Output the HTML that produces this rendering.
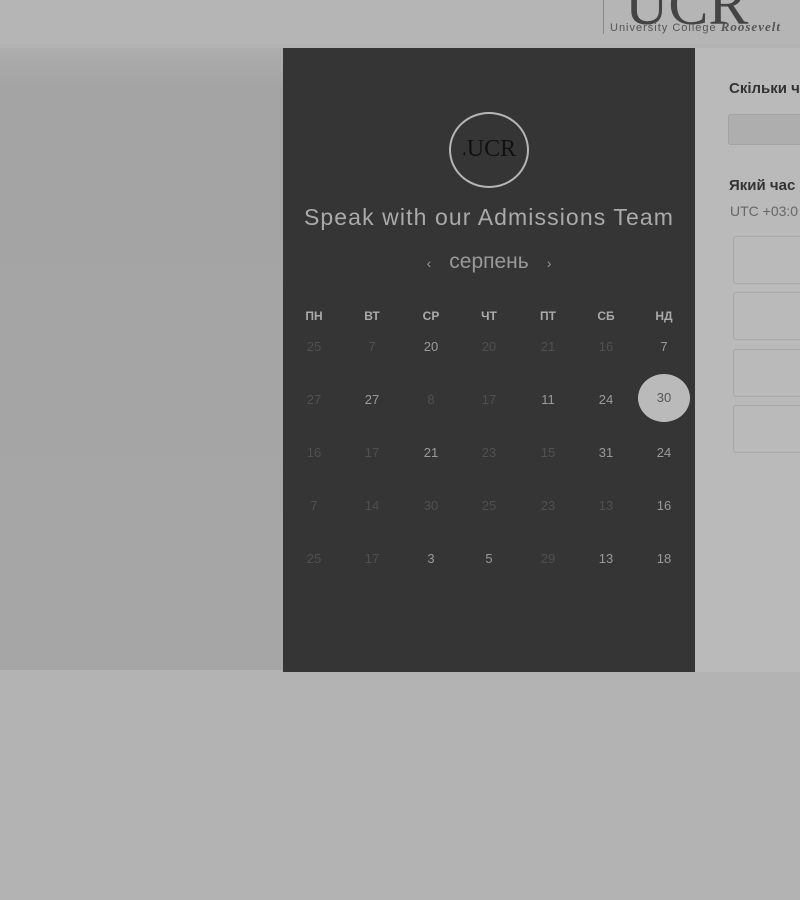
<!DOCTYPE html>
<html><head><meta charset="utf-8"><style>
*{margin:0;padding:0;box-sizing:border-box}
body{width:800px;height:900px;background:#b3b3b3;position:relative;overflow:hidden;font-family:"Liberation Sans",sans-serif}
.hdr{position:absolute;left:0;top:0;width:800px;height:44px;background:#b5b5b5}
.left{position:absolute;left:0;top:48px;width:283px;height:622px;background:linear-gradient(#adadad,#a4a4a4 40px,#a6a6a6)}
.dark{position:absolute;left:283px;top:48px;width:412px;height:624px;background:#353535}
.right{position:absolute;left:695px;top:48px;width:105px;height:624px;background:#bababa}
.logo{position:absolute;left:166px;top:64px;width:80px;height:76px;border:2px solid #b5b5b5;border-radius:50%;color:#111;font-family:"Liberation Serif",serif;font-size:24px;text-align:center;line-height:70px}
.title{position:absolute;left:0;width:412px;top:156px;text-align:center;color:#aaa;font-size:23px;letter-spacing:1.1px}
.month{position:absolute;left:0;width:412px;top:202px;text-align:center;color:#999;font-size:21px}
.d{position:absolute;width:50px;margin-left:-25px;text-align:center;font-size:13px;color:#505050}
.h{color:#aaa;font-weight:bold;font-size:12px}
.l{color:#9a9a9a}
.sel{position:absolute;width:52px;height:48px;border-radius:50%;background:#bababa;color:#555;text-align:center;line-height:48px;font-size:13px}
</style></head><body>
<div class="hdr"></div>
<div style="position:absolute;left:603px;top:0;width:200px;height:34px;border-left:1px solid #888"></div>
<div style="position:absolute;left:610px;top:19px;font-size:11px;color:#555;letter-spacing:1px;white-space:nowrap">University College <i style="font-family:'Liberation Serif',serif;font-weight:bold;font-size:13px">Roosevelt</i></div>
<div style="position:absolute;left:625px;top:-30px;font-family:'Liberation Serif',serif;font-size:60px;color:#444">UCR</div>
<div class="left"></div>
<div class="dark">
<div class="logo"><span style="font-size:8px">◖</span>UCR</div>
<div class="title">Speak with our Admissions Team</div>
<div class="month"><span style="font-size:14px;margin-right:18px">‹</span>серпень<span style="font-size:14px;margin-left:18px">›</span></div>
</div>
<div class="right">
<div style="position:absolute;left:34px;top:32px;font-weight:bold;font-size:15px;color:#333;white-space:nowrap">Скільки ч</div>
<div style="position:absolute;left:33px;top:66px;width:80px;height:31px;background:#aeaeae;border:1px solid #a3a3a3;border-radius:3px"></div>
<div style="position:absolute;left:34px;top:129px;font-weight:bold;font-size:15px;color:#333;white-space:nowrap">Який час</div>
<div style="position:absolute;left:35px;top:155px;font-size:14px;color:#666;white-space:nowrap">UTC +03:0</div>
<div style="position:absolute;left:38px;top:188px;width:80px;height:48px;border:1px solid #a8a8a8;border-radius:3px"></div>
<div style="position:absolute;left:38px;top:244px;width:80px;height:48px;border:1px solid #a8a8a8;border-radius:3px"></div>
<div style="position:absolute;left:38px;top:301px;width:80px;height:48px;border:1px solid #a8a8a8;border-radius:3px"></div>
<div style="position:absolute;left:38px;top:357px;width:80px;height:48px;border:1px solid #a8a8a8;border-radius:3px"></div>
</div>
<div id="cal"></div>
<script>
var xs=[314,372,431,489,548,606,664],ys=[309,339,392,445,498,551];
var h=["ПН","ВТ","СР","ЧТ","ПТ","СБ","НД"];
var r=[["25","7","20","20","21","16","7"],["27","27","8","17","11","24",""],["16","17","21","23","15","31","24"],["7","14","30","25","23","13","16"],["25","17","3","5","29","13","18"]];
var light={"0,2":1,"0,6":1,"1,1":1,"1,5":1,"1,4":1,"2,2":1,"2,5":1,"2,6":1,"3,6":1,"4,2":1,"4,3":1,"4,5":1,"4,6":1};
var s="";
for(var i=0;i<7;i++)s+='<div class="d h" style="left:'+xs[i]+'px;top:'+ys[0]+'px">'+h[i]+'</div>';
for(var j=0;j<5;j++)for(var i=0;i<7;i++)if(r[j][i])s+='<div class="d'+(light[j+","+i]?' l':'')+'" style="left:'+xs[i]+'px;top:'+ys[j+1]+'px">'+r[j][i]+'</div>';
s+='<div class="sel" style="left:638px;top:374px">30</div>';
document.getElementById("cal").innerHTML=s;
</script>
</body></html>
